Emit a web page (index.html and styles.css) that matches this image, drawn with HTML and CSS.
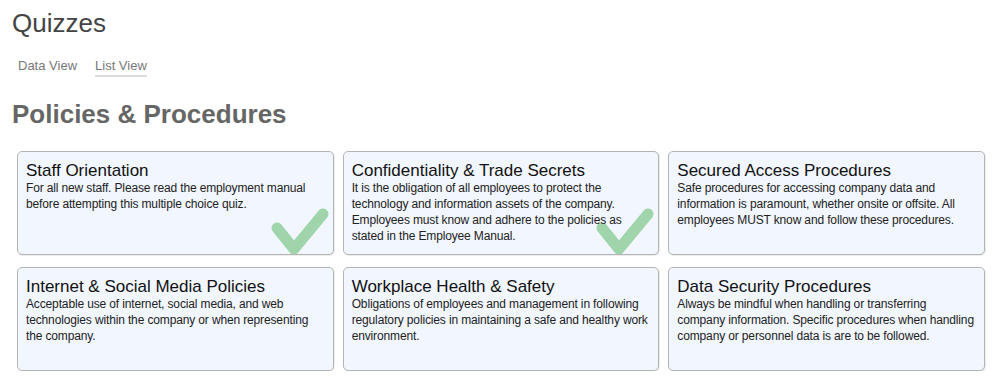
FILE: index.html
```html
<!DOCTYPE html>
<html lang="en">
<head>
<meta charset="utf-8">
<title>Quizzes</title>
<link rel="stylesheet" href="styles.css">
</head>
<body>
<div class="page">
  <h1 class="page-title">Quizzes</h1>
  <nav class="views">
    <a class="view">Data View</a>
    <a class="view active">List View</a>
  </nav>
  <h2 class="section-title">Policies &amp; Procedures</h2>
  <div class="cards">
    <div class="card">
      <div class="card-title">Staff Orientation</div>
      <div class="card-text">For all new staff. Please read the employment manual before attempting this multiple choice quiz.</div>
      <svg class="check" viewBox="0 0 58 48" width="58" height="48"><polyline points="6,21 23,42 52,7" /></svg>
    </div>
    <div class="card">
      <div class="card-title">Confidentiality &amp; Trade Secrets</div>
      <div class="card-text">It is the obligation of all employees to protect the technology and information assets of the company. Employees must know and adhere to the policies as stated in the Employee Manual.</div>
      <svg class="check" viewBox="0 0 58 48" width="58" height="48"><polyline points="6,21 23,42 52,7" /></svg>
    </div>
    <div class="card">
      <div class="card-title">Secured Access Procedures</div>
      <div class="card-text">Safe procedures for accessing company data and information is paramount, whether onsite or offsite. All employees MUST know and follow these procedures.</div>
    </div>
    <div class="card">
      <div class="card-title">Internet &amp; Social Media Policies</div>
      <div class="card-text">Acceptable use of internet, social media, and web technologies within the company or when representing the company.</div>
    </div>
    <div class="card">
      <div class="card-title">Workplace Health &amp; Safety</div>
      <div class="card-text">Obligations of employees and management in following regulatory policies in maintaining a safe and healthy work environment.</div>
    </div>
    <div class="card">
      <div class="card-title">Data Security Procedures</div>
      <div class="card-text">Always be mindful when handling or transferring company information. Specific procedures when handling company or personnel data is are to be followed.</div>
    </div>
  </div>
</div>
</body>
</html>
```

FILE: styles.css
```css
html, body {
  margin: 0;
  padding: 0;
  background: #ffffff;
}
body {
  font-family: "Liberation Sans", Arial, sans-serif;
  color: #222;
}
.page {
  padding: 8px 12px 0 12px;
}
.page-title {
  margin: 0;
  font-size: 26px;
  line-height: 30px;
  font-weight: normal;
  color: #444;
}
.views {
  display: flex;
  gap: 18px;
  margin-top: 20px;
  padding-left: 6px;
}
.view {
  font-size: 13px;
  line-height: 15px;
  color: #777;
  padding-bottom: 2px;
  border-bottom: 2px solid transparent;
}
.view.active {
  border-bottom-color: #dcdcdc;
}
.section-title {
  margin: 22px 0 0 0;
  font-size: 26px;
  line-height: 30px;
  font-weight: bold;
  color: #666;
}
.cards {
  display: grid;
  grid-template-columns: repeat(3, 1fr);
  grid-auto-rows: 104px;
  column-gap: 9px;
  row-gap: 12px;
  width: 968px;
  margin: 22px 0 0 5px;
}
.card {
  position: relative;
  box-sizing: border-box;
  background: #f2f6fe;
  border: 1px solid #b4b4b4;
  border-radius: 5px;
  box-shadow: 1px 1px 1px rgba(0,0,0,0.08);
  padding: 10px 7px 8px 8px;
  overflow: hidden;
}
.card-title {
  font-size: 17px;
  line-height: 17px;
  color: #111;
}
.card-text {
  position: relative;
  z-index: 1;
  font-size: 12px;
  line-height: 16px;
  letter-spacing: -0.14px;
  color: #222;
  margin-top: 1px;
}
.check {
  position: absolute;
  right: 4px;
  bottom: -1px;
}
.check polyline {
  fill: none;
  stroke: #a0d4ab;
  stroke-width: 11;
  stroke-linecap: round;
  stroke-linejoin: round;
}
```
